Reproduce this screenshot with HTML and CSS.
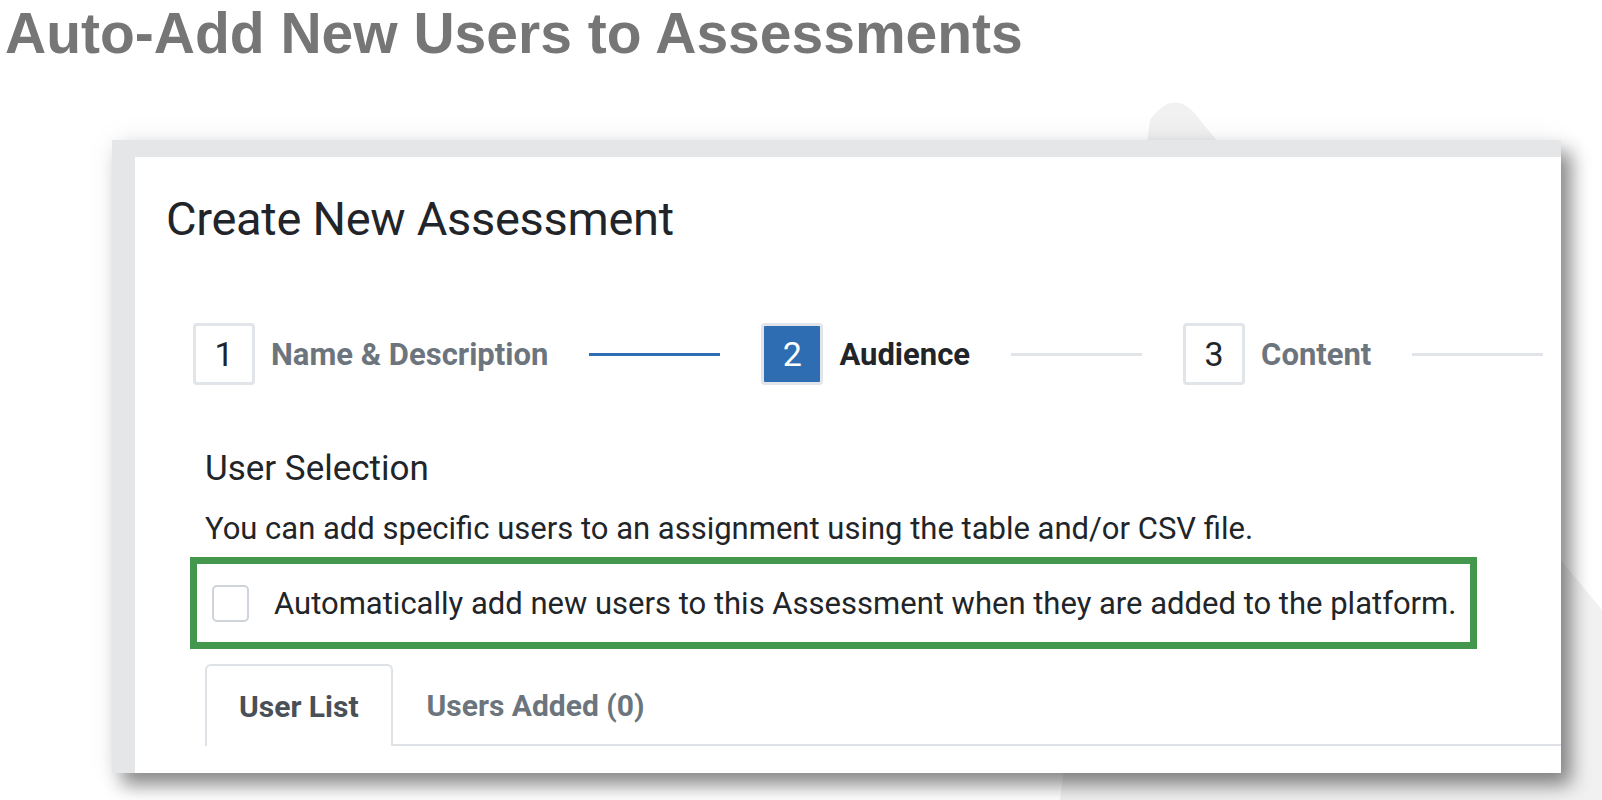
FILE: index.html
```html
<!DOCTYPE html>
<html lang="en">
<head>
    <meta charset="UTF-8">
    <meta name="viewport" content="width=device-width, initial-scale=1.0">
    <title>Auto-Add New Users to Assessments</title>
    <link rel="stylesheet" href="styles.css">
</head>
<body>
    <h1 class="page-title">Auto-Add New Users to Assessments</h1>

    <div class="stage">
        <!-- faint watermark shape behind the screenshot -->
        <svg class="backdrop" width="602" height="710" viewBox="0 0 602 710">
            <path d="M150 30 Q175 -5 200 30 L602 520 L602 710 L60 710 Z" fill="#f1f1f2"></path>
        </svg>

        <div class="shot">
            <div class="modal">
                <h2 class="modal-title">Create New Assessment</h2>

                <ol class="stepper">
                    <li class="step done">
                        <span class="step-num">1</span>
                        <span class="step-label">Name &amp; Description</span>
                    </li>
                    <li class="step-line active"></li>
                    <li class="step current">
                        <span class="step-num">2</span>
                        <span class="step-label">Audience</span>
                    </li>
                    <li class="step-line"></li>
                    <li class="step">
                        <span class="step-num">3</span>
                        <span class="step-label">Content</span>
                    </li>
                    <li class="step-line"></li>
                </ol>

                <div class="audience">
                    <h3>User Selection</h3>
                    <p>You can add specific users to an assignment using the table and/or CSV file.</p>

                    <label class="auto-add">
                        <span class="checkbox"></span>
                        <span>Automatically add new users to this Assessment when they are added to the platform.</span>
                    </label>

                    <ul class="tabs">
                        <li class="tab active">User List</li>
                        <li class="tab">Users Added (0)</li>
                    </ul>
                </div>
            </div>
        </div>
    </div>
</body>
</html>
```

FILE: styles.css
```css
:root {
    --blue: #2f6db2;
    --green: #43984e;
    --dark: #212529;
    --muted: #6c757d;
    --line: #e1e4e8;
    --frame: #e5e6e8;
}

body {
    margin: 0;
    background: #fff;
    overflow: hidden;
    height: 800px;
}

.page-title {
    margin: 0;
    padding: 5px 0 0 5px;
    font-family: 'Liberation Sans', Arial, sans-serif;
    font-size: 57px;
    line-height: 1;
    font-weight: bold;
    color: #767676;
}

.stage {
    position: relative;
    height: 738px;
    padding-top: 78px;
    box-sizing: border-box;
}

.backdrop {
    position: absolute;
    top: 28px;
    left: 1000px;
    z-index: 0;
}

.shot {
    position: relative;
    z-index: 1;
    margin-left: 112px;
    width: 1426px;
    height: 616px;
    border-left: 23px solid var(--frame);
    border-top: 17px solid var(--frame);
    background: #fff;
    overflow: hidden;
    box-shadow: 10px 12px 18px rgba(0, 0, 0, 0.45), 0 0 30px rgba(0, 0, 0, 0.06);
}

.modal {
    font-family: Roboto, 'Noto Sans', sans-serif;
    color: var(--dark);
}

.modal-title {
    margin: 0;
    padding: 38px 0 0 31px;
    font-size: 47px;
    line-height: 1;
    font-weight: 400;
    letter-spacing: -0.3px;
}

.stepper {
    list-style: none;
    margin: 81px 0 0 58px;
    padding: 0;
    display: flex;
    align-items: center;
    white-space: nowrap;
}

.step {
    display: flex;
    align-items: center;
    gap: 16px;
    flex-shrink: 0;
}

.step-num {
    width: 56px;
    height: 56px;
    border: 3px solid var(--line);
    border-radius: 4px;
    display: flex;
    align-items: center;
    justify-content: center;
    font-size: 34px;
    color: var(--dark);
}

.step-label {
    font-size: 31px;
    font-weight: 700;
    color: var(--muted);
}

.step.current .step-num {
    background: var(--blue);
    color: #fff;
}

.step.current .step-label {
    color: var(--dark);
}

.step-line {
    flex-shrink: 0;
    width: 131px;
    height: 3px;
    margin: 0 41px;
    background: var(--line);
}

.step-line.active {
    background: var(--blue);
}

.audience {
    padding-left: 55px;
}

.audience h3 {
    margin: 66px 0 0 15px;
    font-size: 35px;
    line-height: 1;
    font-weight: 400;
}

.audience p {
    margin: 25px 0 0 15px;
    font-size: 31px;
    line-height: 35px;
}

.auto-add {
    margin-top: 11px;
    width: 1258px;
    height: 78px;
    border: 7px solid var(--green);
    display: flex;
    align-items: center;
    gap: 25px;
    padding-left: 15px;
    font-size: 31px;
}

.checkbox {
    width: 33px;
    height: 33px;
    border: 2px solid #ced4da;
    border-radius: 5px;
}

.tabs {
    list-style: none;
    margin: 15px 0 0 15px;
    padding: 0;
    display: flex;
    border-bottom: 2px solid #dee2e6;
}

.tab {
    height: 78px;
    padding: 0 32px;
    display: flex;
    align-items: center;
    font-size: 30px;
    font-weight: 700;
    color: var(--muted);
    border: 2px solid transparent;
    border-bottom: none;
    margin-bottom: -2px;
}

.tab.active {
    color: #495057;
    background: #fff;
    border-color: #dee2e6;
    border-radius: 6px 6px 0 0;
    height: 80px;
}
```
